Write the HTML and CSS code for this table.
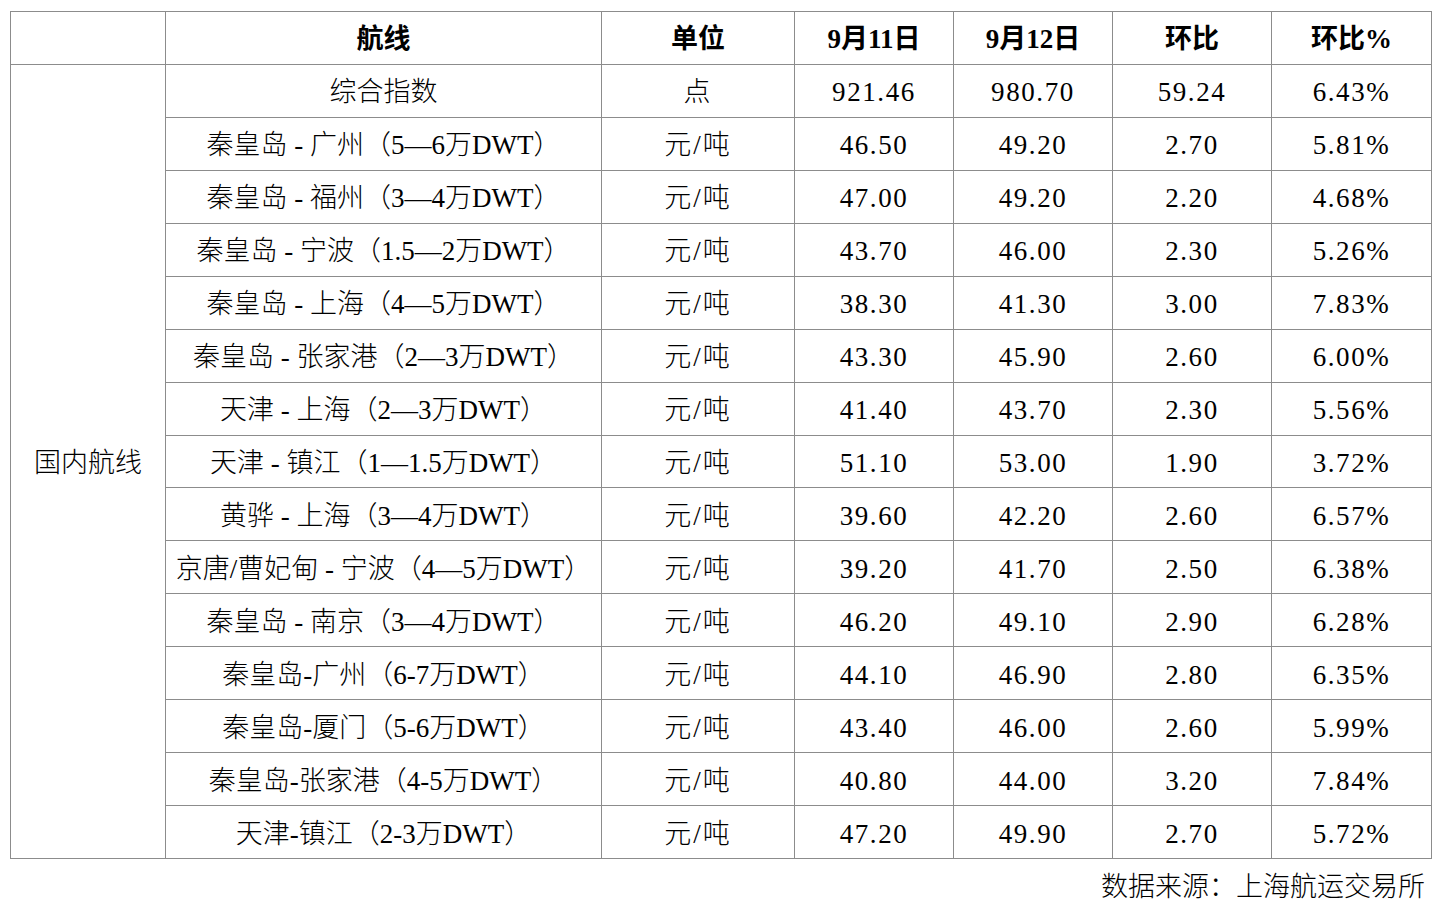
FILE: index.html
```html
<!DOCTYPE html>
<html lang="zh-CN">
<head>
<meta charset="utf-8">
<title>航线运价指数</title>
<link rel="stylesheet" href="styles.css">
</head>
<body>
<div class="page">
<table class="rates">
  <colgroup>
    <col class="c-cat"><col class="c-route"><col class="c-unit"><col class="c-num"><col class="c-num"><col class="c-num"><col class="c-last">
  </colgroup>
  <thead>
    <tr><th></th><th>航线</th><th>单位</th><th>9月11日</th><th>9月12日</th><th>环比</th><th>环比%</th></tr>
  </thead>
  <tbody>
    <tr><td class="cat" rowspan="15">国内航线</td><td>综合指数</td><td>点</td><td>921.46</td><td>980.70</td><td>59.24</td><td>6.43%</td></tr>
    <tr><td>秦皇岛 - 广州（5—6万DWT）</td><td>元/吨</td><td>46.50</td><td>49.20</td><td>2.70</td><td>5.81%</td></tr>
    <tr><td>秦皇岛 - 福州（3—4万DWT）</td><td>元/吨</td><td>47.00</td><td>49.20</td><td>2.20</td><td>4.68%</td></tr>
    <tr><td>秦皇岛 - 宁波（1.5—2万DWT）</td><td>元/吨</td><td>43.70</td><td>46.00</td><td>2.30</td><td>5.26%</td></tr>
    <tr><td>秦皇岛 - 上海（4—5万DWT）</td><td>元/吨</td><td>38.30</td><td>41.30</td><td>3.00</td><td>7.83%</td></tr>
    <tr><td>秦皇岛 - 张家港（2—3万DWT）</td><td>元/吨</td><td>43.30</td><td>45.90</td><td>2.60</td><td>6.00%</td></tr>
    <tr><td>天津 - 上海（2—3万DWT）</td><td>元/吨</td><td>41.40</td><td>43.70</td><td>2.30</td><td>5.56%</td></tr>
    <tr><td>天津 - 镇江（1—1.5万DWT）</td><td>元/吨</td><td>51.10</td><td>53.00</td><td>1.90</td><td>3.72%</td></tr>
    <tr><td>黄骅 - 上海（3—4万DWT）</td><td>元/吨</td><td>39.60</td><td>42.20</td><td>2.60</td><td>6.57%</td></tr>
    <tr><td>京唐/曹妃甸 - 宁波（4—5万DWT）</td><td>元/吨</td><td>39.20</td><td>41.70</td><td>2.50</td><td>6.38%</td></tr>
    <tr><td>秦皇岛 - 南京（3—4万DWT）</td><td>元/吨</td><td>46.20</td><td>49.10</td><td>2.90</td><td>6.28%</td></tr>
    <tr><td>秦皇岛-广州（6-7万DWT）</td><td>元/吨</td><td>44.10</td><td>46.90</td><td>2.80</td><td>6.35%</td></tr>
    <tr><td>秦皇岛-厦门（5-6万DWT）</td><td>元/吨</td><td>43.40</td><td>46.00</td><td>2.60</td><td>5.99%</td></tr>
    <tr><td>秦皇岛-张家港（4-5万DWT）</td><td>元/吨</td><td>40.80</td><td>44.00</td><td>3.20</td><td>7.84%</td></tr>
    <tr><td>天津-镇江（2-3万DWT）</td><td>元/吨</td><td>47.20</td><td>49.90</td><td>2.70</td><td>5.72%</td></tr>
  </tbody>
</table>
<p class="source">数据来源：上海航运交易所</p>
</div>
</body>
</html>
```
FILE: styles.css
```css
html, body {
  margin: 0;
  padding: 0;
  background: #ffffff;
}
body {
  font-family: "Liberation Serif", "Noto Sans CJK SC", serif;
  color: #000000;
  font-size: 27px;
  font-weight: 300;
}
.page {
  padding: 11px 5px 0 10px;
}
.rates {
  border-collapse: collapse;
  table-layout: fixed;
  width: 1422px;
}
.c-cat { width: 155px; }
.c-route { width: 436px; }
.c-unit { width: 193px; }
.c-num { width: 159px; }
.c-last { width: 160px; }
.rates th,
.rates td {
  border: 1px solid #8c8c8c;
  height: 48.94px;
  padding: 3px 0 0 0;
  text-align: center;
  vertical-align: middle;
  white-space: nowrap;
  line-height: 30px;
}
.rates th {
  font-weight: 700;
}
.rates tbody td:nth-last-child(-n+4) {
  letter-spacing: 1.6px;
}
.rates tbody td:nth-last-child(5) {
  letter-spacing: 2px;
}
.source {
  margin: 10px 0 0 0;
  padding-right: 6px;
  text-align: right;
  line-height: 36px;
}
```
